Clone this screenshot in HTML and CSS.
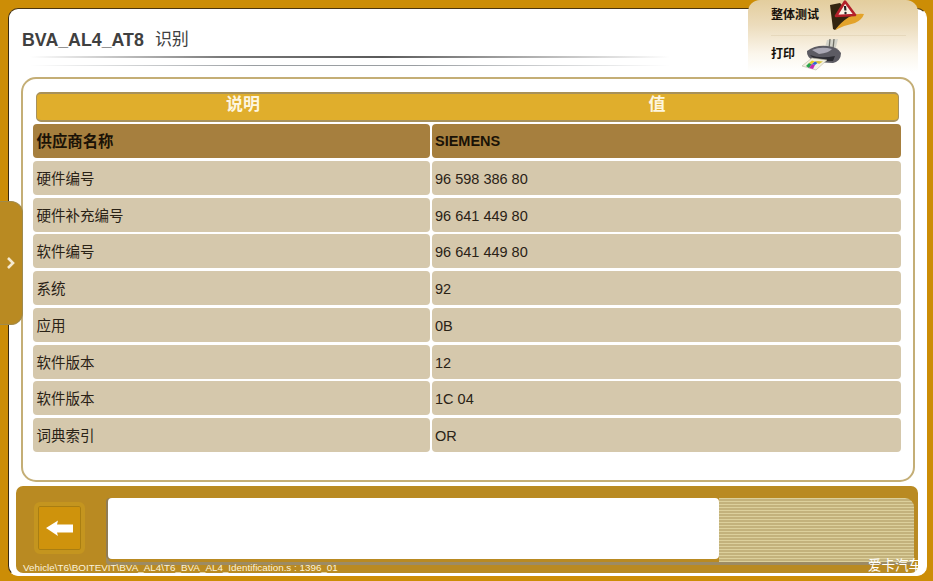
FILE: index.html
```html
<!DOCTYPE html>
<html lang="zh">
<head>
<meta charset="utf-8">
<title>BVA_AL4_AT8 识别</title>
<link rel="stylesheet" href="styles.css">
</head>
<body>
<div class="frame">
  <div class="panel">
    <header class="head">
      <h1 class="title"><span class="code">BVA_AL4_AT8</span><span class="name">识别</span></h1>
      <div class="rule rule-a"></div>
      <div class="rule rule-b"></div>
    </header>
    <section class="card">
      <div class="thead"><span>说明</span><span>值</span></div>
      <div class="rows">
        <div class="row strong"><div>供应商名称</div><div>SIEMENS</div></div>
        <div class="row"><div>硬件编号</div><div>96 598 386 80</div></div>
        <div class="row"><div>硬件补充编号</div><div>96 641 449 80</div></div>
        <div class="row"><div>软件编号</div><div>96 641 449 80</div></div>
        <div class="row"><div>系统</div><div>92</div></div>
        <div class="row"><div>应用</div><div>0B</div></div>
        <div class="row"><div>软件版本</div><div>12</div></div>
        <div class="row"><div>软件版本</div><div>1C 04</div></div>
        <div class="row"><div>词典索引</div><div>OR</div></div>
      </div>
    </section>
    <footer class="foot">
      <div class="foot-top"></div>
      <div class="foot-main">
        <button class="back" aria-label="返回">
          <svg width="30" height="20" viewBox="0 0 30 20"><path d="M1 10 L13 2.5 L12 6.5 L28 6.5 L28 14.5 L12 14.5 L13 18 Z" fill="#fff"/></svg>
        </button>
        <div class="msg-wrap">
          <div class="message"></div>
          <div class="stripes"></div>
        </div>
      </div>
      <div class="path">Vehicle\T6\BOITEVIT\BVA_AL4\T6_BVA_AL4_Identification.s : 1396_01</div>
    </footer>
  </div>
</div>

<aside class="tools">
  <div class="tool tool-first">
    <span class="tool-label">整体测试</span>
    <svg class="warn" width="36" height="31" viewBox="0 0 36 31">
      <path d="M1 5 L11 3 L22 14 L30 15 Q18 20 6 30 L4 29 Z" fill="#33240f"/>
      <path d="M6 30 Q12 22 20 17 Q27 13 35 14 Q33 20 26 23 Q16 25 6 30 Z" fill="#e3a32a"/>
      <path d="M16 1.5 L26 15 L7 16 Z" fill="#fbf1e4" stroke="#b3202a" stroke-width="2.6" stroke-linejoin="round"/>
      <path d="M16 6 L16.4 10.5" stroke="#222" stroke-width="2.2"/>
      <circle cx="16.5" cy="13" r="1.2" fill="#222"/>
    </svg>
  </div>
  <div class="tool">
    <span class="tool-label">打印</span>
    <svg class="printer" width="40" height="33" viewBox="0 0 40 33">
      <path d="M25 2 L36 1 L33 13 L22 13 Z" fill="#d2d2c8"/>
      <path d="M28 1 L27 11 M32 1 L31 11" stroke="#6f6f66" stroke-width="1.3"/>
      <path d="M5 13 Q13 7 25 8 Q36 9 39 15 Q39 23 31 25 L14 24 Q4 20 5 13 Z" fill="#5c5b63"/>
      <path d="M10 12 Q19 8 30 11 Q27 15 17 16 Z" fill="#aaa8b4"/>
      <path d="M8 17 Q18 21 33 18 L31 23 L14 23 Z" fill="#2b2b31"/>
      <path d="M0 28 L10 20 L25 22 L14 32 Z" fill="#f3f1e2" stroke="#b9b6a2" stroke-width=".6"/>
      <path d="M4 28 L7 25 L10 26 L7 30 Z" fill="#27a34a"/>
      <path d="M7 30 L10 26 L13 27 L11 31 Z" fill="#c42ab0"/>
      <path d="M7 25 L10 22.5 L13 23.5 L10 26 Z" fill="#e8d020"/>
      <path d="M10 26 L13 23.5 L17 24 L13 27 Z" fill="#2f62d8"/>
      <path d="M13 23.5 L16 23 L21 23.5 L17 26 Z" fill="#d8c23a"/>
    </svg>
  </div>
</aside>

<button class="side-tab" aria-label="展开">
  <svg width="10" height="14" viewBox="0 0 10 14"><path d="M2 2 L7 7 L2 12" fill="none" stroke="#f5ead0" stroke-width="2.6"/></svg>
</button>

<div class="watermark">爱卡汽车</div>
</body>
</html>
```

FILE: styles.css
```css
* { box-sizing: border-box; }
html, body { margin: 0; padding: 0; }
body {
  position: relative;
  width: 933px;
  height: 581px;
  overflow: hidden;
  background: #cc8d06;
  font-family: "Liberation Sans", "Noto Sans CJK SC", sans-serif;
  color: #2c2418;
}
.frame { padding: 8px 6px 5px 8px; height: 581px; }
.panel {
  height: 568px;
  background: #fff;
  border: 1px solid #3a2a10;
  border-top-color: #4a3510;
  border-right: 1px solid #fff;
  border-bottom: 1px solid #fff;
  border-radius: 10px;
  padding: 0 10px 2px 7px;
  display: flex;
  flex-direction: column;
}
.head { height: 68px; padding: 20px 0 0 6px; }
.title {
  margin: 0;
  height: 27px;
  font-size: 17px;
  line-height: 22px;
  font-weight: normal;
  color: #404040;
  display: flex;
  gap: 11px;
}
.code { font-weight: bold; font-size: 17.8px; }
.rule { margin-left: 8px; width: 640px; }
.rule-a {
  height: 2px;
  background: linear-gradient(90deg, rgba(120,120,120,0) 0, #7a7a7a 30%, #5a5a5a 55%, rgba(120,120,120,0) 100%);
}
.rule-b {
  height: 1px;
  margin-top: 7px;
  background: linear-gradient(90deg, rgba(150,150,150,0) 0, #9a9ea2 35%, #9a9ea2 60%, rgba(150,150,150,0) 100%);
}
.card {
  height: 405px;
  margin: 0 0 0 5px;
  width: 894px;
  border: 2px solid #c4ae76;
  border-radius: 15px;
  background: #fff;
  padding: 13px 11px 0 10px;
}
.thead {
  margin: 0 3px 0 3px;
  height: 30px;
  display: grid;
  grid-template-columns: 412px 1fr;
  background: #e0ae2c;
  border: 1px solid #a8915a;
  border-width: 2px 1px;
  border-radius: 5px;
  color: #fdf6e0;
  font-size: 17px;
  font-weight: bold;
  line-height: 22px;
  text-align: center;
}
.thead span:last-child { padding-right: 33px; }
.rows { margin-top: 2px; display: flex; flex-direction: column; gap: 2.75px; }
.row {
  display: grid;
  grid-template-columns: 397px 471px;
  grid-template-rows: 34px;
  font-size: 14.5px;
  line-height: 33px;
}
.row > div {
  background: #d5c8ac;
  padding: 2px 0 0 3.5px;
  border-radius: 4px;
  color: #2a2216;
}
.row > div:last-child { margin-left: 2px; padding-left: 3px; }
.strong > div { background: #a67f3e; font-weight: bold; color: #1a1206; padding-top: 1px; }
.strong > div:first-child { font-size: 15.4px; }
.foot {
  margin: 4px 0 0 0;
  width: 902px;
  height: 87px;
  background: #b98a22;
  border-radius: 7px;
  display: flex;
  flex-direction: column;
}
.foot-top { height: 12px; }
.foot-main { display: flex; height: 64px; }
.back {
  margin: 4px 23px 0 18px;
  padding: 0;
  width: 51px;
  height: 52px;
  background: #cf930c;
  border: 4px solid #c4951f;
  box-shadow: inset 0 0 0 1px #a97e12;
  border-radius: 6px;
  display: flex;
  align-items: center;
  justify-content: center;
}
.msg-wrap {
  display: flex;
  width: 806px;
  height: 64px;
  box-shadow: -2px 3px 0 #9c8b64;
  border-radius: 4px 9px 0 4px;
}
.message {
  width: 611px;
  height: 61px;
  background: #fff;
  border-radius: 4px;
  box-shadow: -2px 0 0 #8f7c55;
}
.stripes {
  width: 195px;
  height: 64px;
  background: repeating-linear-gradient(180deg, #dcd09c 0, #dcd09c 1px, #c3b27c 1px, #c3b27c 3px);
  border-radius: 0 9px 0 0;
}
.path {
  height: 11px;
  margin-left: 7px;
  font-size: 9.85px;
  line-height: 11px;
  color: #fbf3dc;
  white-space: nowrap;
  position: relative;
}
.tools {
  position: absolute;
  left: 748px;
  top: 0;
  width: 170px;
  height: 72px;
  border-radius: 12px 12px 0 0;
  background: linear-gradient(180deg, #e3cd9d 0, #ecdcbc 35%, #fbf6ec 75%, #fff 100%);
  padding: 0 12px 0 23px;
}
.tool { display: flex; align-items: center; height: 35px; }
.tool-first { border-bottom: 1px solid #e6d8bc; height: 36px; align-items: flex-start; padding-top: 8px; }
.tool-label { font-size: 12px; line-height: 14px; font-weight: bold; color: #15100a; white-space: nowrap; }
.warn { margin-left: 10px; margin-top: -8px; }
.printer { margin-left: 7px; margin-top: 2px; }
.side-tab {
  position: absolute;
  left: 0;
  top: 201px;
  width: 23px;
  height: 124px;
  padding: 0;
  background: #b98a22;
  border: 1px solid #a08a4c;
  border-left: 0;
  border-radius: 0 12px 12px 0;
  display: flex;
  align-items: center;
  justify-content: center;
}
.watermark {
  position: absolute;
  left: 868px;
  top: 557px;
  width: 54px;
  height: 18px;
  overflow: hidden;
  white-space: nowrap;
  font-size: 13.5px;
  line-height: 18px;
  color: #fff;
}
```
